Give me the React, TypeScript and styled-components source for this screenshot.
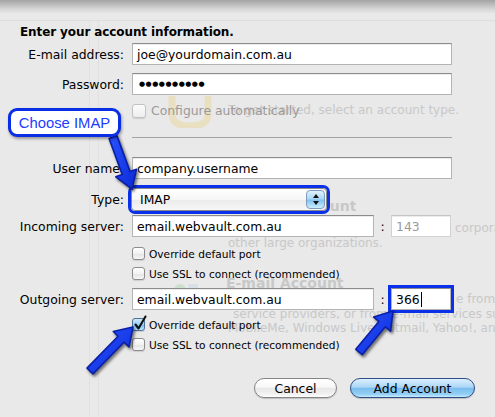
import React from "react";
import styled, { createGlobalStyle } from "styled-components";

const Global = createGlobalStyle`
  html, body { margin: 0; padding: 0; background: #e9e9e9; }
  body { width: 495px; height: 417px; overflow: hidden; }
`;

const FONT = `"DejaVu Sans", "Liberation Sans", sans-serif`;

const Screen = styled.div`
  position: relative;
  width: 495px;
  height: 417px;
  overflow: hidden;
  background: #e9e9e9;
  font-family: ${FONT};
  color: #000;
`;

const TopShadow = styled.div`
  height: 14px;
  background: linear-gradient(#a4a4a4 0px, #b9b9b9 4px, #d6d6d6 9px, #e9e9e9 14px);
`;

/* faded background screen (underlying pane) */
const Ghost = styled.div`
  position: absolute;
  inset: 0;
  z-index: 0;
  overflow: hidden;
  color: #c8c8c8;
  font-family: ${FONT};
`;

const GhostHLine = styled.div`
  position: absolute;
  left: 0;
  right: 0;
  top: 20px;
  border-top: 1px solid #dedede;
`;

const GhostVLine = styled.div<{ $x: number }>`
  position: absolute;
  left: ${(p) => p.$x}px;
  top: 20px;
  bottom: 0;
  border-left: 1px solid #e1e1e1;
`;

const GhostText = styled.div<{ $x: number; $y: number; $w?: number; $bold?: boolean; $size?: number }>`
  position: absolute;
  left: ${(p) => p.$x}px;
  top: ${(p) => p.$y}px;
  width: ${(p) => (p.$w ? `${p.$w}px` : "auto")};
  overflow: hidden;
  white-space: nowrap;
  font-size: ${(p) => p.$size ?? 12}px;
  font-weight: ${(p) => (p.$bold ? 700 : 400)};
  line-height: 14px;
`;

const GhostIcon = styled.svg<{ $x: number; $y: number }>`
  position: absolute;
  left: ${(p) => p.$x}px;
  top: ${(p) => p.$y}px;
`;

const Form = styled.div`
  position: relative;
  z-index: 1;
`;

const Title = styled.div`
  margin-top: 10px;
  padding-left: 20px;
  font-size: 12px;
  font-weight: 700;
  line-height: 16px;
  letter-spacing: -0.1px;
`;

const Row = styled.div<{ $mt: number; $h?: number }>`
  display: grid;
  grid-template-columns: 124px auto;
  column-gap: 8px;
  align-items: center;
  margin-top: ${(p) => p.$mt}px;
  height: ${(p) => p.$h ?? 22}px;
`;

const Label = styled.div`
  text-align: right;
  font-size: 12.4px;
  white-space: nowrap;
`;

const Field = styled.div<{ $w: number; $disabled?: boolean; $hl?: boolean }>`
  box-sizing: border-box;
  width: ${(p) => p.$w}px;
  height: 22px;
  padding-left: 4px;
  display: flex;
  align-items: center;
  background: #fff;
  border: 1px solid ${(p) => (p.$disabled ? "#d2d2d2" : "#b4b4b4")};
  border-top-color: ${(p) => (p.$disabled ? "#c4c4c4" : "#8c8c8c")};
  box-shadow: ${(p) =>
    p.$hl ? "0 0 0 3px #0a30ea" : "inset 0 1px 0 #ececec"};
  color: ${(p) => (p.$disabled ? "#9b9b9b" : "#000")};
  font-size: 12.4px;
  white-space: nowrap;
  overflow: hidden;
`;

const Dots = styled.span`
  font-size: 7px;
  letter-spacing: 0.5px;
  padding-left: 2px;
`;

const Caret = styled.span`
  display: inline-block;
  width: 1px;
  height: 15px;
  background: #000;
  margin-left: 1px;
`;

const FieldGroup = styled.div`
  display: flex;
  align-items: center;
`;

const Colon = styled.div`
  width: 17px;
  text-align: center;
  font-size: 12.4px;
`;

const CheckItem = styled.div<{ $muted?: boolean; $size?: number }>`
  display: flex;
  align-items: center;
  gap: ${(p) => (p.$size ? 5 : 4)}px;
  font-size: ${(p) => p.$size ?? 10.6}px;
  color: ${(p) => (p.$muted ? "#9a9a9a" : "#000")};
  white-space: nowrap;
`;

const Box = styled.div<{ $checked?: boolean; $muted?: boolean; $s?: number }>`
  position: relative;
  box-sizing: border-box;
  width: ${(p) => p.$s ?? 13}px;
  height: ${(p) => p.$s ?? 13}px;
  border-radius: 3px;
  border: 1px solid ${(p) => (p.$muted ? "#c2c2c2" : p.$checked ? "#4f6f94" : "#8c8c8c")};
  background: ${(p) =>
    p.$checked
      ? "linear-gradient(#cfe8fb, #9ccff5 50%, #79bdf0 52%, #b8e4ff)"
      : p.$muted
      ? "linear-gradient(#fbfbfb, #eeeeee)"
      : "linear-gradient(#ffffff, #f2f2f2 50%, #e4e4e4 52%, #f6f6f6)"};
  box-shadow: 0 1px 1px rgba(0, 0, 0, 0.12);
`;

const Tick = styled.svg`
  position: absolute;
  left: 0px;
  top: -4px;
  overflow: visible;
`;

const Separator = styled.div`
  margin: 20px 0 0 132px;
  width: 320px;
  height: 0;
  border-top: 1px solid #a3a3a3;
`;

const Select = styled.div`
  box-sizing: border-box;
  margin-left: -1px;
  width: 196px;
  height: 23px;
  border: 1px solid #8a8a8a;
  border-radius: 4px;
  background: linear-gradient(#ffffff, #f6f6f6 50%, #ebebeb 52%, #f7f7f7);
  display: flex;
  align-items: center;
  box-shadow: 0 0 0 3px #0a30ea;
`;

const SelectText = styled.div`
  flex: 1;
  padding-left: 8px;
  font-size: 12.4px;
`;

const Stepper = styled.div`
  box-sizing: border-box;
  width: 19px;
  height: 19px;
  margin-right: 1px;
  border-radius: 4px;
  border: 1px solid #7f9cbd;
  background: linear-gradient(#e0f1fd, #a9d6f6 48%, #7fc0ef 52%, #c9eeff);
  display: flex;
  flex-direction: column;
  align-items: center;
  justify-content: center;
  gap: 3px;
`;

const Tri = styled.div<{ $down?: boolean }>`
  width: 0;
  height: 0;
  border-left: 3px solid transparent;
  border-right: 3px solid transparent;
  ${(p) => (p.$down ? "border-top: 4px solid #111;" : "border-bottom: 4px solid #111;")}
`;

const ButtonRow = styled.div`
  margin-top: 27px;
  display: flex;
  justify-content: flex-end;
  gap: 13px;
  padding-right: 20px;
`;

const Button = styled.div<{ $primary?: boolean; $w: number }>`
  box-sizing: border-box;
  width: ${(p) => p.$w}px;
  height: 20px;
  border-radius: 10px;
  display: flex;
  align-items: center;
  justify-content: center;
  font-size: 12.4px;
  color: #000;
  border: 1px solid ${(p) => (p.$primary ? "#2e4e86" : "#858585")};
  background: ${(p) =>
    p.$primary
      ? "linear-gradient(#dcefff 0%, #acd6f6 45%, #7bbdee 52%, #93d0f6 85%, #c9ecff 100%)"
      : "linear-gradient(#ffffff 0%, #f8f8f8 45%, #e8e8e8 52%, #f2f2f2 85%, #ffffff 100%)"};
  box-shadow: 0 1px 1px rgba(0, 0, 0, 0.18);
`;

/* annotations */
const Callout = styled.div`
  position: absolute;
  left: 8px;
  top: 108px;
  width: 113px;
  height: 29px;
  box-sizing: border-box;
  z-index: 3;
  border: 3px solid #0a2de6;
  border-radius: 9px;
  background: #fff;
  display: flex;
  align-items: center;
  justify-content: center;
  font-family: "Liberation Sans", Arial, sans-serif;
  font-size: 14.8px;
  color: #1b3cff;
  box-shadow: 1px 2px 3px rgba(0, 0, 0, 0.35);
`;

const ArrowLayer = styled.svg`
  position: absolute;
  left: 0;
  top: 0;
  z-index: 2;
  pointer-events: none;
`;

function arrowPoints(x1: number, y1: number, x2: number, y2: number, sw = 4.2, hw = 11, hl = 17) {
  const dx = x2 - x1;
  const dy = y2 - y1;
  const L = Math.hypot(dx, dy);
  const ux = dx / L;
  const uy = dy / L;
  const px = -uy;
  const py = ux;
  const bx = x2 - ux * hl;
  const by = y2 - uy * hl;
  const pts: [number, number][] = [
    [x1 + px * sw, y1 + py * sw],
    [bx + px * sw, by + py * sw],
    [bx + px * hw, by + py * hw],
    [x2, y2],
    [bx - px * hw, by - py * hw],
    [bx - px * sw, by - py * sw],
    [x1 - px * sw, y1 - py * sw],
  ];
  return pts.map((p) => p.map((v) => v.toFixed(1)).join(",")).join(" ");
}

const ARROWS = [
  { x1: 113, y1: 137, x2: 132, y2: 189 },
  { x1: 90, y1: 371, x2: 133, y2: 327 },
  { x1: 359, y1: 352, x2: 393, y2: 311 },
];

function Arrows() {
  return (
    <ArrowLayer width={495} height={417} viewBox="0 0 495 417">
      <defs>
        <filter id="sh" x="-20%" y="-20%" width="140%" height="140%">
          <feGaussianBlur stdDeviation="1.5" />
        </filter>
        <linearGradient id="ab" x1="0" y1="0" x2="1" y2="1">
          <stop offset="0" stopColor="#2a52ff" />
          <stop offset="1" stopColor="#0a2bd6" />
        </linearGradient>
      </defs>
      {ARROWS.map((a, i) => {
        const pts = arrowPoints(a.x1, a.y1, a.x2, a.y2);
        return (
          <g key={i}>
            <polygon
              points={pts}
              transform="translate(1.5,2)"
              fill="rgba(0,0,0,0.45)"
              stroke="rgba(0,0,0,0.45)"
              strokeWidth={2}
              strokeLinejoin="round"
              filter="url(#sh)"
            />
            <polygon
              points={pts}
              fill="url(#ab)"
              stroke="#0a1fa8"
              strokeWidth={1.6}
              strokeLinejoin="round"
            />
          </g>
        );
      })}
    </ArrowLayer>
  );
}

function Check({ checked, muted, s }: { checked?: boolean; muted?: boolean; s?: number }) {
  return (
    <Box $checked={checked} $muted={muted} $s={s}>
      {checked && (
        <Tick width={14} height={16} viewBox="0 0 14 16">
          <path d="M2.5 9.5 L5.5 13.5 L12.5 1.5" fill="none" stroke="#111" strokeWidth={2.1} strokeLinecap="round" strokeLinejoin="round" />
        </Tick>
      )}
    </Box>
  );
}

export default function App() {
  return (
    <>
      <Global />
      <Screen>
        <Ghost>
          <GhostHLine />
          <GhostVLine $x={89} />
          <GhostVLine $x={98} />
          <GhostIcon $x={166} $y={94} width={48} height={34} viewBox="0 0 48 34">
            <path d="M6 2 L6 20 Q6 32 24 32 Q42 32 42 20 L42 2" fill="none" stroke="rgba(235,205,120,0.35)" strokeWidth={7} />
          </GhostIcon>
          <GhostText $x={228} $y={103}>To get started, select an account type.</GhostText>
          <GhostText $x={212} $y={199} $bold $size={14}>Exchange Account</GhostText>
          <GhostText $x={455} $y={221} $w={40}>corporations</GhostText>
          <GhostText $x={228} $y={236}>other large organizations.</GhostText>
          <GhostIcon $x={172} $y={280} width={30} height={20} viewBox="0 0 30 20">
            <circle cx="8" cy="10" r="6" fill="rgba(120,200,120,0.25)" />
            <rect x="16" y="4" width="10" height="12" fill="rgba(160,180,220,0.2)" />
          </GhostIcon>
          <GhostText $x={226} $y={276} $bold $size={14}>E-mail Account</GhostText>
          <GhostText $x={456} $y={292} $w={39}>e from Internet</GhostText>
          <GhostText $x={233} $y={307} $w={262}>service providers, or from e-mail services such as</GhostText>
          <GhostText $x={228} $y={321} $w={267}>MobileMe, Windows Live Hotmail, Yahoo!, and others.</GhostText>
        </Ghost>

        <TopShadow />
        <Form>
          <Title>Enter your account information.</Title>

          <Row $mt={3}>
            <Label>E-mail address:</Label>
            <Field $w={320}>joe@yourdomain.com.au</Field>
          </Row>
          <Row $mt={8}>
            <Label>Password:</Label>
            <Field $w={320}>
              <Dots>●●●●●●●●●●</Dots>
            </Field>
          </Row>
          <Row $mt={8} $h={14}>
            <span />
            <CheckItem $muted $size={12.4}>
              <Check muted s={14} />
              Configure automatically
            </CheckItem>
          </Row>

          <Separator />

          <Row $mt={19}>
            <Label>User name:</Label>
            <Field $w={320}>company.username</Field>
          </Row>
          <Row $mt={9} $h={23}>
            <Label>Type:</Label>
            <Select>
              <SelectText>IMAP</SelectText>
              <Stepper>
                <Tri />
                <Tri $down />
              </Stepper>
            </Select>
          </Row>
          <Row $mt={4}>
            <Label>Incoming server:</Label>
            <FieldGroup>
              <Field $w={242}>email.webvault.com.au</Field>
              <Colon>:</Colon>
              <Field $w={60} $disabled>143</Field>
            </FieldGroup>
          </Row>
          <Row $mt={10} $h={13}>
            <span />
            <CheckItem>
              <Check />
              Override default port
            </CheckItem>
          </Row>
          <Row $mt={7} $h={13}>
            <span />
            <CheckItem>
              <Check />
              Use SSL to connect (recommended)
            </CheckItem>
          </Row>
          <Row $mt={8}>
            <Label>Outgoing server:</Label>
            <FieldGroup>
              <Field $w={242}>email.webvault.com.au</Field>
              <Colon>:</Colon>
              <Field $w={60} $hl>
                366
                <Caret />
              </Field>
            </FieldGroup>
          </Row>
          <Row $mt={8} $h={13}>
            <span />
            <CheckItem>
              <Check checked />
              Override default port
            </CheckItem>
          </Row>
          <Row $mt={7} $h={13}>
            <span />
            <CheckItem>
              <Check />
              Use SSL to connect (recommended)
            </CheckItem>
          </Row>

          <ButtonRow>
            <Button $w={83}>Cancel</Button>
            <Button $w={125} $primary>Add Account</Button>
          </ButtonRow>
        </Form>

        <Arrows />
        <Callout>Choose IMAP</Callout>
      </Screen>
    </>
  );
}
